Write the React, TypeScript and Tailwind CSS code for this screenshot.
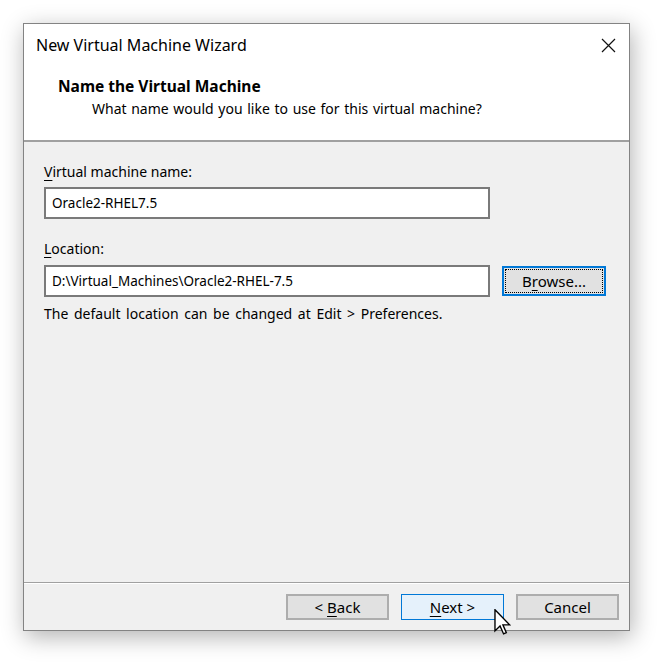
import React from "react";

const font = { fontFamily: '"Noto Sans", "Liberation Sans", sans-serif' };

const Key = ({ children }: { children: React.ReactNode }) => (
  <span className="underline decoration-1 underline-offset-[3px]">{children}</span>
);

const Cursor = () => (
  <svg width="17" height="26" viewBox="0 0 12 19" className="absolute left-[494px] top-[609px]">
    <path
      d="M0.5 0.5 L0.5 16 L4.2 12.4 L6.8 18.2 L8.8 17.3 L6.3 11.6 L11.2 11.6 Z"
      fill="#fff"
      stroke="#000"
      strokeWidth="1"
      strokeLinejoin="miter"
    />
  </svg>
);

export default function App() {
  return (
    <div className="relative w-[660px] h-[663px] bg-white text-[14px] text-black" style={font}>
      <div className="pl-[23px] pt-[23px]">
        <div className="w-[607px] h-[608px] flex flex-col border border-[#838383] bg-[#f0f0f0] shadow-[2px_6px_22px_rgba(0,0,0,0.3)]">
          {/* header */}
          <div className="h-[116px] bg-white flex flex-col">
            <div className="h-[42px] flex items-center justify-between pl-[12px] pr-[13px]">
              <span className="leading-5 text-[16px]">New Virtual Machine Wizard</span>
              <svg width="15" height="15" viewBox="0 0 15 15">
                <path d="M1 1 L14 14 M14 1 L1 14" stroke="#111" strokeWidth="1.2" />
              </svg>
            </div>
            <div className="pt-[10px] pl-[34px] leading-5 font-bold text-[15.5px]">Name the Virtual Machine</div>
            <div className="pt-[3px] pl-[68px] leading-5 [word-spacing:1px]">
              What name would you like to use for this virtual machine?
            </div>
          </div>
          <div className="h-[2px] bg-[#a0a0a0]" />

          {/* body */}
          <div className="flex-1 pl-[20px] pt-[20px]">
            <div className="leading-5">
              <Key>V</Key>irtual machine name:
            </div>
            <div className="mt-[5px] w-[446px] h-[32px] bg-white border-2 border-[#7a7a7a] flex items-center pl-[6px] text-[13.5px]">
              Oracle2-RHEL7.5
            </div>
            <div className="mt-[20px] leading-5">
              <Key>L</Key>ocation:
            </div>
            <div className="mt-[6px] flex items-center gap-[12px]">
              <div className="w-[446px] h-[32px] bg-white border-2 border-[#7a7a7a] flex items-center pl-[6px] text-[13.5px]">
                D:\Virtual_Machines\Oracle2-RHEL-7.5
              </div>
              <div className="w-[104px] h-[30px] bg-[#e1e1e1] border-2 border-[#0078d7] p-[1px] text-[15px]">
                <div className="w-full h-full border border-dotted border-black flex items-center justify-center">
                  <span>
                    B<Key>r</Key>owse...
                  </span>
                </div>
              </div>
            </div>
            <div className="mt-[7px] leading-5 [word-spacing:2px]">
              The default location can be changed at Edit &gt; Preferences.
            </div>
          </div>

          {/* footer */}
          <div className="h-px bg-[#a0a0a0]" />
          <div className="h-px bg-white" />
          <div className="h-[46px] flex justify-end gap-[12px] pt-[10px] pr-[10px] text-[15px]">
            <div className="w-[103px] h-[26px] bg-[#e1e1e1] border-2 border-[#adadad] flex items-center justify-center">
              <span>
                &lt; <Key>B</Key>ack
              </span>
            </div>
            <div className="w-[103px] h-[26px] bg-[#e5f1fb] border border-[#0078d7] flex items-center justify-center">
              <span>
                <Key>N</Key>ext &gt;
              </span>
            </div>
            <div className="w-[103px] h-[26px] bg-[#e1e1e1] border-2 border-[#adadad] flex items-center justify-center">
              Cancel
            </div>
          </div>
        </div>
      </div>
      <Cursor />
    </div>
  );
}
